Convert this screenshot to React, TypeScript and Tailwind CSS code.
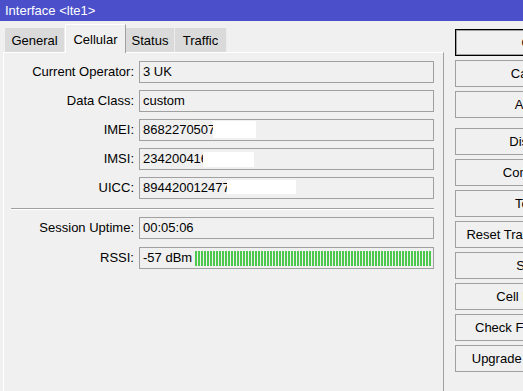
import React from "react";

const tabs = [
  { name: "General", w: "w-[60px]" },
  { name: "Cellular", w: "w-[61px]", active: true },
  { name: "Status", w: "w-[49px]" },
  { name: "Traffic", w: "w-[52px]" },
];

const buttons = [
  "OK",
  "Cancel",
  "Apply",
  "Disable",
  "Comment",
  "Torch",
  "Reset Traffic Counters",
  "Scan",
  "Cell Monitor",
  "Check For Updates",
  "Upgrade Firmware...",
];

function Field({
  label,
  children,
  className = "",
}: {
  label: string;
  children?: React.ReactNode;
  className?: string;
}) {
  return (
    <div className={`flex items-center gap-[5px] ${className}`}>
      <div className="w-[130px] shrink-0 text-right">{label}</div>
      <div className="relative flex h-[22px] w-[295px] items-center border border-[#a0a0a0] pl-[3px]">
        {children}
      </div>
    </div>
  );
}

function Hidden({ pos }: { pos: string }) {
  return <span className={`absolute bg-white ${pos}`} />;
}

export default function App() {
  const stripes = Array.from({ length: 79 });

  return (
    <div className="flex h-[391px] w-[523px] flex-col overflow-hidden bg-[#f0f0f0] font-['Liberation_Sans',Arial,sans-serif] text-[13px] text-black">
      <div className="flex h-[21px] shrink-0 items-center bg-[#4b4fca] pl-[5px] text-white">
        {"Interface <lte1>"}
      </div>

      <div className="flex min-h-0 flex-1">
        {/* left: tabs + panel */}
        <div className="flex w-[444px] shrink-0 flex-col pt-[3px]">
          <div className="relative z-10 -mb-px flex h-[29px] items-end pl-[5px]">
            {tabs.map((t) =>
              t.active ? (
                <div
                  key={t.name}
                  className={`${t.w} flex h-[29px] items-start justify-center border-l border-t border-r border-white border-r-[#a0a0a0] bg-[#f0f0f0] pt-[5px]`}
                >
                  {t.name}
                </div>
              ) : (
                <div
                  key={t.name}
                  className={`${t.w} mb-px flex h-[24px] items-center justify-center border-r border-[#ececec] bg-[#dadada] pt-px`}
                >
                  {t.name}
                </div>
              )
            )}
          </div>

          <div className="ml-[3px] w-[441px] flex-1 border-l border-t border-r border-white border-r-[#a0a0a0] pt-[8px]">
            <div className="flex flex-col gap-[7px]">
              <Field label="Current Operator:">3 UK</Field>
              <Field label="Data Class:">custom</Field>
              <Field label="IMEI:">
                8682270507
                <Hidden pos="left-[73px] top-[1px] h-[17px] w-[43px]" />
              </Field>
              <Field label="IMSI:">
                2342004169
                <Hidden pos="left-[63px] top-[3px] h-[15px] w-[51px]" />
              </Field>
              <Field label="UICC:">
                8944200124777
                <Hidden pos="left-[87px] top-[2px] h-[14px] w-[69px]" />
              </Field>
            </div>

            <div className="ml-[7px] mt-[9px] w-[423px] border-t border-b border-[#a0a0a0] border-b-white" />

            <div className="mt-[7px] flex flex-col gap-[8px]">
              <Field label="Session Uptime:">00:05:06</Field>
              <Field label="RSSI:">
                -57 dBm
                <div className="ml-auto mr-[2px] flex h-[15px] gap-px">
                  {stripes.map((_, i) => (
                    <span key={i} className="h-full w-[2px] bg-[#4cc94c]" />
                  ))}
                </div>
              </Field>
            </div>
          </div>
        </div>

        {/* right: buttons */}
        <div className="ml-[11px] flex shrink-0 flex-col gap-[4px] pt-[8px]">
          {buttons.map((b, i) => (
            <button
              key={b}
              type="button"
              className={`h-[27px] w-[152px] shrink-0 whitespace-nowrap bg-[#f0f0f0] text-center ${
                i === 0
                  ? "border border-black shadow-[inset_0_0_0_1px_#a0a0a0]"
                  : "border border-[#a0a0a0]"
              } ${i === 3 ? "mt-[6px]" : ""}`}
            >
              {b}
            </button>
          ))}
        </div>
      </div>
    </div>
  );
}
